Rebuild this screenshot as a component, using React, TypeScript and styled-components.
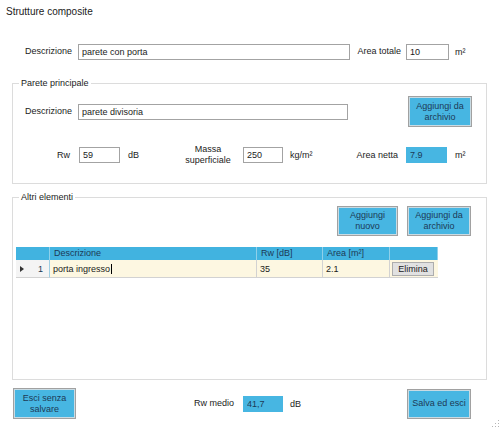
import React from 'react'
import styled, { createGlobalStyle } from 'styled-components'

const Global = createGlobalStyle`
  html, body {
    margin: 0;
    padding: 0;
    background: #ffffff;
  }
  * {
    box-sizing: border-box;
  }
`

const colors = {
  blue: '#47b6e2',
  head: '#41b3e0',
  text: '#1b1b1b',
  navy: '#1d3a56',
  line: '#dcdcdc',
  row: '#fdf7e1',
}

const Window = styled.div`
  position: relative;
  width: 502px;
  height: 430px;
  padding-top: 6px;
  font-family: "Liberation Sans", Arial, sans-serif;
  font-size: 9px;
  color: ${colors.text};
  overflow: hidden;
`

const Title = styled.div`
  height: 12px;
  line-height: 12px;
  padding-left: 6px;
  font-size: 10px;
`

const Row = styled.div<{ h: number; top?: number; left?: number }>`
  display: flex;
  align-items: center;
  height: ${({ h }) => h}px;
  margin-top: ${({ top }) => top || 0}px;
  padding-left: ${({ left }) => left || 0}px;
`

const Label = styled.span<{ w: number; align?: string; mr?: number }>`
  flex-shrink: 0;
  width: ${({ w }) => w}px;
  margin-right: ${({ mr }) => mr || 0}px;
  text-align: ${({ align }) => align || 'right'};
  line-height: 11px;
  white-space: nowrap;
`

const Unit = styled.span<{ w: number; ml: number }>`
  flex-shrink: 0;
  width: ${({ w }) => w}px;
  margin-left: ${({ ml }) => ml}px;
  white-space: nowrap;
`

const Field = styled.input<{ w: number; ro?: boolean }>`
  flex-shrink: 0;
  width: ${({ w }) => w}px;
  height: 16px;
  margin: 0;
  padding: 0 3px;
  font-family: inherit;
  font-size: 9px;
  color: ${({ ro }) => (ro ? colors.navy : colors.text)};
  background: ${({ ro }) => (ro ? colors.blue : '#ffffff')};
  border: 1px solid ${({ ro }) => (ro ? colors.blue : '#a3a3a3')};
  border-radius: 0;
  outline: none;
`

const Button = styled.button<{ w: number; h: number; ml?: number }>`
  flex-shrink: 0;
  width: ${({ w }) => w}px;
  height: ${({ h }) => h}px;
  margin: 0 0 0 ${({ ml }) => ml || 0}px;
  padding: 0 2px;
  font-family: inherit;
  font-size: 9px;
  line-height: 11px;
  color: ${colors.navy};
  background: ${colors.blue};
  border: 1px solid #a1a1a1;
  box-shadow: inset 0 0 0 1px #c9dbe3;
  border-radius: 0;
`

const Group = styled.fieldset<{ h: number; top: number }>`
  width: 475px;
  height: ${({ h }) => h}px;
  margin: ${({ top }) => top}px 0 0 12px;
  padding: 0;
  border: 1px solid ${colors.line};
  border-radius: 0;
`

const Legend = styled.legend`
  margin-left: 6px;
  padding: 0 2px;
  font-size: 9px;
  line-height: 12px;
`

const Actions = styled.div`
  display: flex;
  justify-content: flex-end;
  gap: 9px;
  height: 30px;
  margin-top: 3px;
  padding-right: 15px;
`

const Grid = styled.div`
  display: grid;
  grid-template-columns: 34px 207px 66px 67px 48px;
  grid-template-rows: 13px 18px;
  width: 422px;
  margin: 11px 0 0 3px;
  background: #ffffff;
`

const HeadCell = styled.div`
  padding-left: 4px;
  line-height: 13px;
  color: ${colors.navy};
  background: ${colors.head};
  border-right: 1px solid #8fd0ea;
`

const Cell = styled.div<{ align?: string }>`
  display: flex;
  align-items: center;
  justify-content: ${({ align }) => align || 'flex-start'};
  padding-left: 3px;
  background: ${colors.row};
  border-right: 1px solid #d2d2d2;
  border-bottom: 1px solid #d2d2d2;
`

const RowHead = styled.div`
  display: flex;
  align-items: center;
  justify-content: space-between;
  padding: 0 6px 0 4px;
  background: #f4f4f4;
  border-right: 1px solid #9fcfe4;
  border-bottom: 1px solid #d2d2d2;
  color: ${colors.navy};
`

const Arrow = styled.span`
  width: 0;
  height: 0;
  border-top: 3px solid transparent;
  border-bottom: 3px solid transparent;
  border-left: 4px solid #333;
`

const Caret = styled.span`
  display: inline-block;
  width: 1px;
  height: 10px;
  margin-left: 1px;
  background: #000;
`

const DeleteButton = styled.button`
  width: 42px;
  height: 14px;
  margin: 0;
  padding: 0;
  font-family: inherit;
  font-size: 9px;
  color: ${colors.text};
  background: #e1e1e1;
  border: 1px solid #adadad;
  border-radius: 0;
`

const DeleteCell = styled.div`
  display: flex;
  align-items: center;
  padding-left: 2px;
  background: ${colors.row};
  border-bottom: 1px solid #d2d2d2;
`

const Grip = styled.svg`
  position: absolute;
  right: 2px;
  bottom: 2px;
`

const App: React.FC = () => {
  return (
    <Window>
      <Global />
      <Title>Strutture composite</Title>

      <Row h={17} top={25}>
        <Label w={72} mr={6}>Descrizione</Label>
        <Field w={272} defaultValue="parete con porta" />
        <Label w={51} mr={5}>Area totale</Label>
        <Field w={43} defaultValue="10" />
        <Unit w={20} ml={6}>m²</Unit>
      </Row>

      <Group h={107} top={17}>
        <Legend>Parete principale</Legend>
        <Row h={31} top={7}>
          <Label w={59} mr={6}>Descrizione</Label>
          <Field w={270} defaultValue="parete divisoria" />
          <Button w={64} h={31} ml={60}>Aggiungi da archivio</Button>
        </Row>
        <Row h={24} top={16}>
          <Label w={57} mr={9}>Rw</Label>
          <Field w={41} defaultValue="59" />
          <Unit w={56} ml={8}>dB</Unit>
          <Label w={48} mr={11} align="center">Massa<br />superficiale</Label>
          <Field w={40} defaultValue="250" />
          <Unit w={60} ml={7}>kg/m²</Unit>
          <Label w={48} mr={8}>Area netta</Label>
          <Field w={41} ro readOnly defaultValue="7.9" />
          <Unit w={20} ml={8}>m²</Unit>
        </Row>
      </Group>

      <Group h={189} top={7}>
        <Legend>Altri elementi</Legend>
        <Actions>
          <Button w={61} h={30}>Aggiungi nuovo</Button>
          <Button w={64} h={30}>Aggiungi da archivio</Button>
        </Actions>
        <Grid>
          <HeadCell />
          <HeadCell>Descrizione</HeadCell>
          <HeadCell>Rw [dB]</HeadCell>
          <HeadCell>Area [m²]</HeadCell>
          <HeadCell />
          <RowHead>
            <Arrow />
            <span>1</span>
          </RowHead>
          <Cell>
            porta ingresso
            <Caret />
          </Cell>
          <Cell>35</Cell>
          <Cell>2.1</Cell>
          <DeleteCell>
            <DeleteButton>Elimina</DeleteButton>
          </DeleteCell>
        </Grid>
      </Group>

      <Row h={31} top={8} left={13}>
        <Button w={63} h={31}>Esci senza salvare</Button>
        <Label w={158} mr={9}>Rw medio</Label>
        <Field w={40} ro readOnly defaultValue="41,7" />
        <Unit w={117} ml={7}>dB</Unit>
        <Button w={64} h={30}>Salva ed esci</Button>
      </Row>

      <Grip width="8" height="8" viewBox="0 0 8 8">
        <rect x="6" y="0" width="1" height="1" fill="#b5b5b5" />
        <rect x="3" y="3" width="1" height="1" fill="#b5b5b5" />
        <rect x="6" y="3" width="1" height="1" fill="#b5b5b5" />
        <rect x="0" y="6" width="1" height="1" fill="#b5b5b5" />
        <rect x="3" y="6" width="1" height="1" fill="#b5b5b5" />
        <rect x="6" y="6" width="1" height="1" fill="#b5b5b5" />
      </Grip>
    </Window>
  )
}

export default App
